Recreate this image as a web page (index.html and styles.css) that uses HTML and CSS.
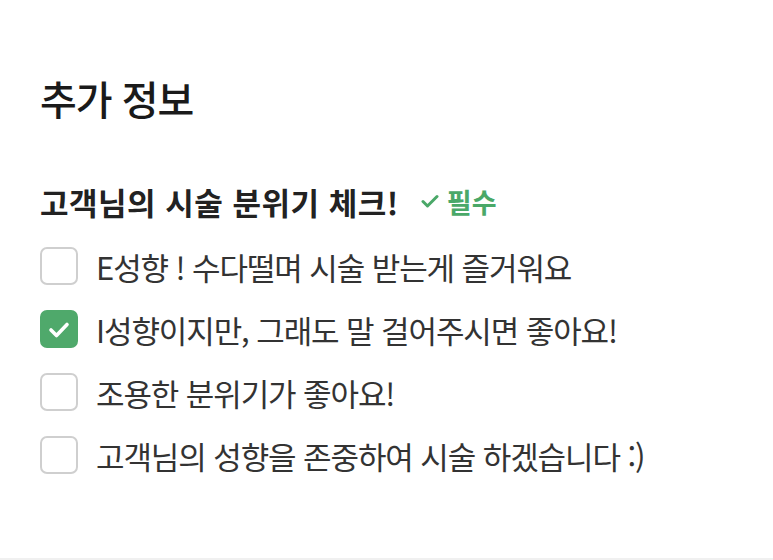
FILE: index.html
```html
<!DOCTYPE html>
<html lang="ko">
<head>
<meta charset="utf-8">
<link rel="stylesheet" href="styles.css">
</head>
<body>
<main class="page">
  <h1 class="title">추가 정보</h1>
  <section class="group">
    <div class="group-head">
      <h2 class="group-title">고객님의 시술 분위기 체크!</h2>
      <span class="required">
        <svg class="req-icon" viewBox="0 0 18 16" width="18" height="16"><path d="M2 8.5 L6.5 13 L16 3.5" fill="none" stroke="currentColor" stroke-width="3" stroke-linecap="round" stroke-linejoin="round"/></svg>
        필수
      </span>
    </div>
    <ul class="options">
      <li class="option"><span class="box"></span><span class="label">E성향 ! 수다떨며 시술 받는게 즐거워요</span></li>
      <li class="option"><span class="box checked"><svg viewBox="0 0 38 38" width="38" height="38"><path d="M11 20 L16.5 25.5 L27 14.5" fill="none" stroke="#fff" stroke-width="3.6" stroke-linecap="round" stroke-linejoin="round"/></svg></span><span class="label">I성향이지만, 그래도 말 걸어주시면 좋아요!</span></li>
      <li class="option"><span class="box"></span><span class="label">조용한 분위기가 좋아요!</span></li>
      <li class="option"><span class="box"></span><span class="label">고객님의 성향을 존중하여 시술 하겠습니다 :)</span></li>
    </ul>
  </section>
</main>
<div class="bottom-bar"></div>
</body>
</html>
```
FILE: styles.css
```css
html, body {
  margin: 0;
  padding: 0;
  background: #fff;
}
body {
  width: 773px;
  height: 560px;
  overflow: hidden;
  display: flex;
  flex-direction: column;
  font-family: "Noto Sans CJK KR", "Noto Sans", sans-serif;
  color: #222;
}
.page {
  flex: 1;
  padding: 70px 40px 0 40px;
}
.title {
  margin: 0;
  font-size: 40px;
  font-weight: 500;
  line-height: 56px;
  letter-spacing: -1px;
  color: #1a1a1a;
}
.group {
  margin-top: 55px;
}
.group-head {
  display: flex;
  align-items: center;
  gap: 22px;
  height: 40px;
}
.group-title {
  margin: 0;
  font-size: 31px;
  font-weight: 700;
  letter-spacing: 0.5px;
  color: #222;
}
.required {
  display: flex;
  align-items: center;
  gap: 8px;
  color: #4aa868;
  font-size: 27px;
  font-weight: 700;
}
.options {
  list-style: none;
  margin: 26px 0 0 0;
  padding: 0;
  display: flex;
  flex-direction: column;
  gap: 25px;
}
.option {
  display: flex;
  align-items: center;
  gap: 18px;
  height: 38px;
}
.box {
  box-sizing: border-box;
  width: 38px;
  height: 38px;
  border: 2px solid #cfcfcf;
  border-radius: 7px;
  background: #fff;
  display: flex;
  align-items: center;
  justify-content: center;
  flex: none;
  overflow: hidden;
}
.box.checked {
  background: #4fa96b;
  border-color: #4fa96b;
}
.box.checked svg {
  flex: none;
  margin: -2px;
}
.label {
  font-size: 31px;
  font-weight: 400;
  letter-spacing: -1.1px;
  color: #333;
}
.bottom-bar {
  height: 2px;
  background: #f0f0f0;
  flex: none;
}
```
